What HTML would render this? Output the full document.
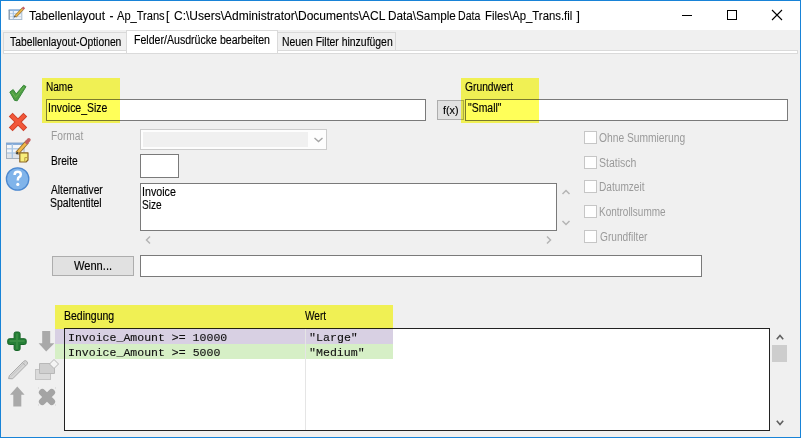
<!DOCTYPE html>
<html><head><meta charset="utf-8">
<style>
*{margin:0;padding:0;box-sizing:border-box}
html,body{width:801px;height:438px;overflow:hidden;background:#f0f0f0}
body{position:relative;font-family:"Liberation Sans",sans-serif;font-size:11px;color:#000}
.a{position:absolute}
.tx{position:absolute;line-height:40px;white-space:pre;transform-origin:0 0;-webkit-text-stroke:0.25px currentColor}
.box{position:absolute;background:#fff;border:1px solid #7a7a7a}
.hl{position:absolute;background:#ffff00;mix-blend-mode:multiply;opacity:.65}
.cb{position:absolute;width:13px;height:13px;border:1px solid #c6c6c6;background:#fefefe}
.tab{position:absolute;top:32px;height:18px;border:1px solid #d9d9d9;border-bottom:none;background:#f0f0f0}
svg{position:absolute;overflow:visible}
</style></head><body>
<!-- window border -->
<div class="a" style="left:0;top:0;width:801px;height:438px;border:1px solid #1883d7"></div>
<div class="a" style="left:1px;top:1px;width:799px;height:29px;background:#fff"></div>

<!-- title icon -->
<svg style="left:8px;top:7px" width="18" height="15" viewBox="0 0 18 15">
 <rect x="1.2" y="2.9" width="12.6" height="9.6" fill="#eef3f9" stroke="#a9bccf" stroke-width="1"/>
 <rect x="0.7" y="2.4" width="13.6" height="1.6" fill="#8db4de"/>
 <line x1="1.2" y1="0" x2="1.2" y2="0" stroke="none"/>
 <line x1="1.5" y1="6.6" x2="13.5" y2="6.6" stroke="#b7cde4" stroke-width="0.9"/>
 <line x1="1.5" y1="9.6" x2="13.5" y2="9.6" stroke="#c3d2e2" stroke-width="0.9"/>
 <line x1="5.3" y1="3.5" x2="5.3" y2="12.4" stroke="#9fbfe0" stroke-width="1"/>
 <line x1="1.2" y1="3" x2="1.2" y2="12.5" stroke="#7f8fa0" stroke-width="1"/>
 <path d="M7.4 9.4 L14.8 1.8" stroke="#9a7a40" stroke-width="2.8"/>
 <path d="M7.4 9.4 L14.8 1.8" stroke="#f0b848" stroke-width="1.5"/>
 <path d="M14.6 2 L16.2 0.4" stroke="#c76065" stroke-width="2.6"/>
 <path d="M6.2 10.2 L7.4 9" stroke="#5a5a5a" stroke-width="1.6"/>
</svg>

<!-- title buttons -->
<div class="a" style="left:682px;top:15px;width:10px;height:1px;background:#000"></div>
<div class="a" style="left:727px;top:10px;width:10px;height:10px;border:1px solid #000"></div>
<svg style="left:772px;top:10px" width="10" height="10" viewBox="0 0 10 10"><path d="M0 0L10 10M10 0L0 10" stroke="#000" stroke-width="1.1"/></svg>

<!-- tabs -->
<div class="a" style="left:3px;top:50px;width:795px;height:4px;background:#fff;border:1px solid #dadada"></div>
<div class="tab" style="left:3px;width:124px"></div>
<div class="tab" style="left:277px;width:119px"></div>
<div class="a" style="left:126px;top:30px;width:152px;height:23px;background:#fff;border:1px solid #dadada;border-bottom:none"></div>

<!-- left icons -->
<svg style="left:6px;top:82px" width="24" height="22" viewBox="0 0 24 22">
 <path d="M3.8 10 L7.2 7.6 L10.2 12 L17.6 3.2 L20 4.6 L11.2 18.8 L8.6 18.4 Z" fill="#4f9e45" stroke="#3a8a3c" stroke-width="1" stroke-linejoin="round"/>
 <path d="M6 10.5 L9.6 15.4 L17.8 5.2" fill="none" stroke="#6cb650" stroke-width="1"/>
</svg>
<svg style="left:6px;top:110px" width="24" height="24" viewBox="0 0 24 24">
 <path d="M6.6 6.6 L17.4 17.4 M17.4 6.6 L6.6 17.4" stroke="#cf4029" stroke-width="5.4" stroke-linecap="square"/>
 <path d="M6.6 6.6 L17.4 17.4 M17.4 6.6 L6.6 17.4" stroke="#f2583a" stroke-width="3.6" stroke-linecap="square"/>
</svg>
<svg style="left:4px;top:136px" width="28" height="28" viewBox="0 0 28 28">
 <rect x="2.5" y="7.2" width="17.5" height="15.3" fill="#f4f6f9" stroke="#a6b0bc" stroke-width="1"/>
 <rect x="2" y="6.7" width="18.5" height="2.2" fill="#80a8d6"/>
 <rect x="3" y="16.5" width="17" height="5.5" fill="#dfe3e8"/>
 <line x1="3" y1="12.8" x2="20" y2="12.8" stroke="#a9c6e4" stroke-width="1.2"/>
 <line x1="3" y1="17" x2="20" y2="17" stroke="#a9c6e4" stroke-width="1.2"/>
 <line x1="8.3" y1="8" x2="8.3" y2="22" stroke="#a9c6e4" stroke-width="1.4"/>
 <path d="M13 17.4 L23.2 5.8" stroke="#8a6a30" stroke-width="4.2"/>
 <path d="M13 17.4 L23.2 5.8" stroke="#f2b84a" stroke-width="2.6"/>
 <path d="M22.8 6.2 L24.9 3.8" stroke="#c46060" stroke-width="3.6" stroke-linecap="round"/>
 <path d="M12.4 18 L14 16.2" stroke="#404040" stroke-width="2"/>
 <path d="M15.8 16.8 H24 V24 L22 26 H15.8 Z" fill="#f8ee7a" stroke="#8a6424" stroke-width="1.2" stroke-linejoin="round"/>
 <path d="M20.8 25.8 V21.6 H24" fill="none" stroke="#b89a40" stroke-width="1"/>
</svg>
<svg style="left:4px;top:164px" width="28" height="28" viewBox="0 0 28 28">
 <circle cx="13.6" cy="15" r="11.2" fill="#80b4ea" stroke="#4c88cf" stroke-width="1.3"/>
 <path d="M10.6 10.9 Q10.6 7.8 13.7 7.8 Q16.8 7.8 16.8 10.5 Q16.8 12.2 15 13.2 Q13.8 13.9 13.8 16.4" fill="none" stroke="#fff" stroke-width="2.5"/>
 <circle cx="13.8" cy="20.4" r="1.6" fill="#fff"/>
</svg>

<!-- inputs -->
<div class="box" style="left:46px;top:99px;width:380px;height:22px"></div>
<div class="a" style="left:437px;top:100px;width:27px;height:20px;background:#e1e1e1;border:1px solid #adadad"></div>
<div class="box" style="left:465px;top:99px;width:323px;height:22px"></div>

<div class="a" style="left:140px;top:129px;width:187px;height:21px;border:1px solid #cccccc;background:#fdfdfd"></div>
<div class="a" style="left:143px;top:132px;width:165px;height:15px;background:#f0f0f0"></div>
<svg style="left:314px;top:137px" width="9" height="6" viewBox="0 0 9 6"><path d="M0.5 1 L4.5 4.6 L8.5 1" fill="none" stroke="#a6a6a6" stroke-width="1.4"/></svg>

<div class="box" style="left:140px;top:154px;width:39px;height:24px"></div>
<div class="box" style="left:140px;top:183px;width:417px;height:48px"></div>
<svg style="left:562px;top:189px" width="8" height="6" viewBox="0 0 8 6"><path d="M0.5 5 L4 1.5 L7.5 5" fill="none" stroke="#b4b4b4" stroke-width="1.5"/></svg>
<svg style="left:562px;top:220px" width="8" height="6" viewBox="0 0 8 6"><path d="M0.5 1 L4 4.5 L7.5 1" fill="none" stroke="#b4b4b4" stroke-width="1.5"/></svg>
<svg style="left:145px;top:236px" width="6" height="8" viewBox="0 0 6 8"><path d="M5 0.5 L1.5 4 L5 7.5" fill="none" stroke="#b4b4b4" stroke-width="1.5"/></svg>
<svg style="left:546px;top:236px" width="6" height="8" viewBox="0 0 6 8"><path d="M1 0.5 L4.5 4 L1 7.5" fill="none" stroke="#b4b4b4" stroke-width="1.5"/></svg>

<div class="cb" style="left:584px;top:131px"></div>
<div class="cb" style="left:584px;top:156px"></div>
<div class="cb" style="left:584px;top:180px"></div>
<div class="cb" style="left:584px;top:205px"></div>
<div class="cb" style="left:584px;top:230px"></div>

<div class="a" style="left:52px;top:256px;width:82px;height:20px;background:#e1e1e1;border:1px solid #adadad"></div>
<div class="box" style="left:140px;top:255px;width:562px;height:22px"></div>

<!-- list -->
<div class="a" style="left:55px;top:329px;width:338px;height:15px;background:#d8d0e3"></div>
<div class="a" style="left:55px;top:344px;width:338px;height:15px;background:#d6efc6"></div>
<div class="a" style="left:64px;top:328px;width:706px;height:103px;border:1px solid #222;border-left-width:1px"></div>
<div class="a" style="left:65px;top:359px;width:704px;height:71px;background:#fff"></div>
<div class="a" style="left:393px;top:329px;width:376px;height:30px;background:#fff"></div>
<div class="a" style="left:305px;top:329px;width:1px;height:101px;background:#e5e5e5"></div>
<svg style="left:776px;top:334px" width="8" height="6" viewBox="0 0 8 6"><path d="M0.8 5.2 L4 1.4 L7.2 5.2" fill="none" stroke="#606060" stroke-width="1.6"/></svg>
<div class="a" style="left:772px;top:345px;width:15px;height:17px;background:#cdcdcd"></div>
<svg style="left:776px;top:420px" width="8" height="6" viewBox="0 0 8 6"><path d="M0.8 0.8 L4 4.6 L7.2 0.8" fill="none" stroke="#606060" stroke-width="1.6"/></svg>

<!-- bottom left icons -->
<svg style="left:4px;top:328px" width="28" height="28" viewBox="0 0 28 28">
 <path d="M11.8 4 H14.4 Q16.1 4 16.1 5.7 V10.7 H20.5 Q22.2 10.7 22.2 12.4 V14.8 Q22.2 16.5 20.5 16.5 H16.1 V20.8 Q16.1 22.5 14.4 22.5 H11.8 Q10.1 22.5 10.1 20.8 V16.5 H5.4 Q3.7 16.5 3.7 14.8 V12.4 Q3.7 10.7 5.4 10.7 H10.1 V5.7 Q10.1 4 11.8 4 Z" fill="#257f36" stroke="#176528" stroke-width="1"/>
 <path d="M5.5 13 H20.5 M13 5.5 V21" stroke="#4a9c50" stroke-width="1.8" opacity=".55"/>
</svg>
<svg style="left:32px;top:328px" width="28" height="28" viewBox="0 0 28 28">
 <path d="M10.2 3 H18.2 V15.2 H22.4 L14.2 23.6 L6.6 15.2 H10.2 Z" fill="#a9a9a9"/>
</svg>
<svg style="left:4px;top:355px" width="28" height="28" viewBox="0 0 28 28">
 <path d="M4.6 23.6 L5.4 20.6 L19.6 6.4 Q21.2 4.8 22.8 6.4 Q24.4 8 22.8 9.6 L8.6 23.8 Z" fill="#d6d6d6" stroke="#ababab" stroke-width="1" stroke-linejoin="round"/>
 <path d="M7 21.4 L21.2 7.2" stroke="#bdbdbd" stroke-width=".8"/>
 <path d="M18.4 7.6 L21.6 10.8" stroke="#b0b0b0" stroke-width="1"/>
</svg>
<svg style="left:32px;top:355px" width="30" height="28" viewBox="0 0 30 28">
 <rect x="3.5" y="14.5" width="15" height="10" fill="#dadada" stroke="#c4c4c4"/>
 <path d="M7.5 8.5 H20 L22.5 11.5 V18.5 H7.5 Z" fill="#cfcfcf" stroke="#b8b8b8" stroke-linejoin="round"/>
 <path d="M22 4.5 L26.5 9 L22 13.5 L17.5 9 Z" fill="#f4f4f4" stroke="#b4b4b4"/>
</svg>
<svg style="left:4px;top:382px" width="28" height="28" viewBox="0 0 28 28">
 <path d="M9.3 24.6 H17.3 V12.8 H20.6 L13.3 4.5 L6 12.8 H9.3 Z" fill="#a9a9a9"/>
</svg>
<svg style="left:32px;top:382px" width="30" height="28" viewBox="0 0 30 28">
 <path d="M10.3 10.3 L19.7 19.7 M19.7 10.3 L10.3 19.7" stroke="#a4a4a4" stroke-width="6.8" stroke-linecap="round"/>
 <path d="M6 6 h1 M23 6 h1 M6 23 h1 M23 23 h1" stroke="#cfcfcf" stroke-width="1"/>
</svg>

<div class="tx" style="left:29.00px;top:-4px;font-family:'Liberation Sans';font-size:12px;color:#000;transform:scaleX(0.9909);-webkit-text-stroke:0.1px currentColor">Tabellenlayout</div>
<div class="tx" style="left:109.40px;top:-4px;font-family:'Liberation Sans';font-size:12px;color:#000;transform:scaleX(1.0000);-webkit-text-stroke:0.1px currentColor">-</div>
<div class="tx" style="left:116.90px;top:-4px;font-family:'Liberation Sans';font-size:12px;color:#000;transform:scaleX(0.9235);-webkit-text-stroke:0.1px currentColor">Ap_Trans</div>
<div class="tx" style="left:166.00px;top:-4px;font-family:'Liberation Sans';font-size:12px;color:#000;transform:scaleX(1.0000);-webkit-text-stroke:0.1px currentColor">[</div>
<div class="tx" style="left:174.00px;top:-4px;font-family:'Liberation Sans';font-size:12px;color:#000;transform:scaleX(1.0000);-webkit-text-stroke:0.1px currentColor">C:\Users\Administrator\Documents\ACL</div>
<div class="tx" style="left:388.22px;top:-4px;font-family:'Liberation Sans';font-size:12px;color:#000;transform:scaleX(0.9779);-webkit-text-stroke:0.1px currentColor">Data\Sample</div>
<div class="tx" style="left:458.32px;top:-4px;font-family:'Liberation Sans';font-size:12px;color:#000;transform:scaleX(0.8800);-webkit-text-stroke:0.1px currentColor">Data</div>
<div class="tx" style="left:484.95px;top:-4px;font-family:'Liberation Sans';font-size:12px;color:#000;transform:scaleX(0.9462);-webkit-text-stroke:0.1px currentColor">Files\Ap_Trans.fil</div>
<div class="tx" style="left:576.50px;top:-4px;font-family:'Liberation Sans';font-size:12px;color:#000;transform:scaleX(1.0000);-webkit-text-stroke:0.1px currentColor">]</div>
<div class="tx" style="left:10.00px;top:22px;font-family:'Liberation Sans';font-size:12px;color:#000;transform:scaleX(0.8605);-webkit-text-stroke:0.15px currentColor">Tabellenlayout-Optionen</div>
<div class="tx" style="left:133.62px;top:20px;font-family:'Liberation Sans';font-size:12px;color:#000;transform:scaleX(0.8824);-webkit-text-stroke:0.15px currentColor">Felder/Ausdrücke bearbeiten</div>
<div class="tx" style="left:281.63px;top:22px;font-family:'Liberation Sans';font-size:12px;color:#000;transform:scaleX(0.8690);-webkit-text-stroke:0.15px currentColor">Neuen Filter hinzufügen</div>
<div class="tx" style="left:46.16px;top:67px;font-family:'Liberation Sans';font-size:12px;color:#000;transform:scaleX(0.8387);-webkit-text-stroke:0.15px currentColor">Name</div>
<div class="tx" style="left:48.13px;top:88px;font-family:'Liberation Sans';font-size:12px;color:#000;transform:scaleX(0.8731);-webkit-text-stroke:0.15px currentColor">Invoice_Size</div>
<div class="tx" style="left:464.80px;top:67px;font-family:'Liberation Sans';font-size:12px;color:#000;transform:scaleX(0.8571);-webkit-text-stroke:0.15px currentColor">Grundwert</div>
<div class="tx" style="left:468.00px;top:88px;font-family:'Liberation Sans';font-size:12px;color:#000;transform:scaleX(0.8684);-webkit-text-stroke:0.15px currentColor">"Small"</div>
<div class="tx" style="left:442.50px;top:90px;font-family:'Liberation Sans';font-size:11.5px;color:#000;transform:scaleX(0.9375);-webkit-text-stroke:0.15px currentColor">f(x)</div>
<div class="tx" style="left:50.65px;top:116px;font-family:'Liberation Sans';font-size:12px;color:#9a9a9a;transform:scaleX(0.8514);-webkit-text-stroke:0px currentColor">Format</div>
<div class="tx" style="left:50.65px;top:141px;font-family:'Liberation Sans';font-size:12px;color:#000;transform:scaleX(0.8500);-webkit-text-stroke:0.15px currentColor">Breite</div>
<div class="tx" style="left:51.00px;top:170px;font-family:'Liberation Sans';font-size:12px;color:#000;transform:scaleX(0.8525);-webkit-text-stroke:0.15px currentColor">Alternativer</div>
<div class="tx" style="left:50.13px;top:183px;font-family:'Liberation Sans';font-size:12px;color:#000;transform:scaleX(0.8707);-webkit-text-stroke:0.15px currentColor">Spaltentitel</div>
<div class="tx" style="left:141.61px;top:172px;font-family:'Liberation Sans';font-size:12px;color:#000;transform:scaleX(0.8919);-webkit-text-stroke:0.15px currentColor">Invoice</div>
<div class="tx" style="left:141.66px;top:185px;font-family:'Liberation Sans';font-size:12px;color:#000;transform:scaleX(0.8409);-webkit-text-stroke:0.15px currentColor">Size</div>
<div class="tx" style="left:599.00px;top:118px;font-family:'Liberation Sans';font-size:12px;color:#9a9a9a;transform:scaleX(0.8550);-webkit-text-stroke:0px currentColor">Ohne Summierung</div>
<div class="tx" style="left:599.12px;top:143px;font-family:'Liberation Sans';font-size:12px;color:#9a9a9a;transform:scaleX(0.8780);-webkit-text-stroke:0px currentColor">Statisch</div>
<div class="tx" style="left:599.46px;top:167px;font-family:'Liberation Sans';font-size:12px;color:#9a9a9a;transform:scaleX(0.8434);-webkit-text-stroke:0px currentColor">Datumzeit</div>
<div class="tx" style="left:599.47px;top:192px;font-family:'Liberation Sans';font-size:12px;color:#9a9a9a;transform:scaleX(0.8316);-webkit-text-stroke:0px currentColor">Kontrollsumme</div>
<div class="tx" style="left:599.60px;top:217px;font-family:'Liberation Sans';font-size:12px;color:#9a9a9a;transform:scaleX(0.8464);-webkit-text-stroke:0px currentColor">Grundfilter</div>
<div class="tx" style="left:74.00px;top:246px;font-family:'Liberation Sans';font-size:12px;color:#000;transform:scaleX(0.9250);-webkit-text-stroke:0.15px currentColor">Wenn...</div>
<div class="tx" style="left:63.62px;top:296px;font-family:'Liberation Sans';font-size:12px;color:#000;transform:scaleX(0.8750);-webkit-text-stroke:0.15px currentColor">Bedingung</div>
<div class="tx" style="left:305.00px;top:296px;font-family:'Liberation Sans';font-size:12px;color:#000;transform:scaleX(0.8400);-webkit-text-stroke:0.15px currentColor">Wert</div>
<div class="tx" style="left:67.50px;top:318px;font-family:'Liberation Mono';font-size:11.5px;color:#111;transform:scaleX(1.0032);-webkit-text-stroke:0.12px currentColor">Invoice_Amount &gt;= 10000</div>
<div class="tx" style="left:67.50px;top:333px;font-family:'Liberation Mono';font-size:11.5px;color:#111;transform:scaleX(1.0033);-webkit-text-stroke:0.12px currentColor">Invoice_Amount &gt;= 5000</div>
<div class="tx" style="left:309.49px;top:318px;font-family:'Liberation Mono';font-size:11.5px;color:#111;transform:scaleX(1.0109);-webkit-text-stroke:0.12px currentColor">"Large"</div>
<div class="tx" style="left:309.49px;top:333px;font-family:'Liberation Mono';font-size:11.5px;color:#111;transform:scaleX(1.0094);-webkit-text-stroke:0.12px currentColor">"Medium"</div>

<!-- highlights -->
<div class="hl" style="left:42px;top:78px;width:78px;height:45px"></div>
<div class="hl" style="left:461px;top:78px;width:78px;height:45px"></div>
<div class="hl" style="left:55px;top:305px;width:338px;height:24px"></div>
</body></html>
